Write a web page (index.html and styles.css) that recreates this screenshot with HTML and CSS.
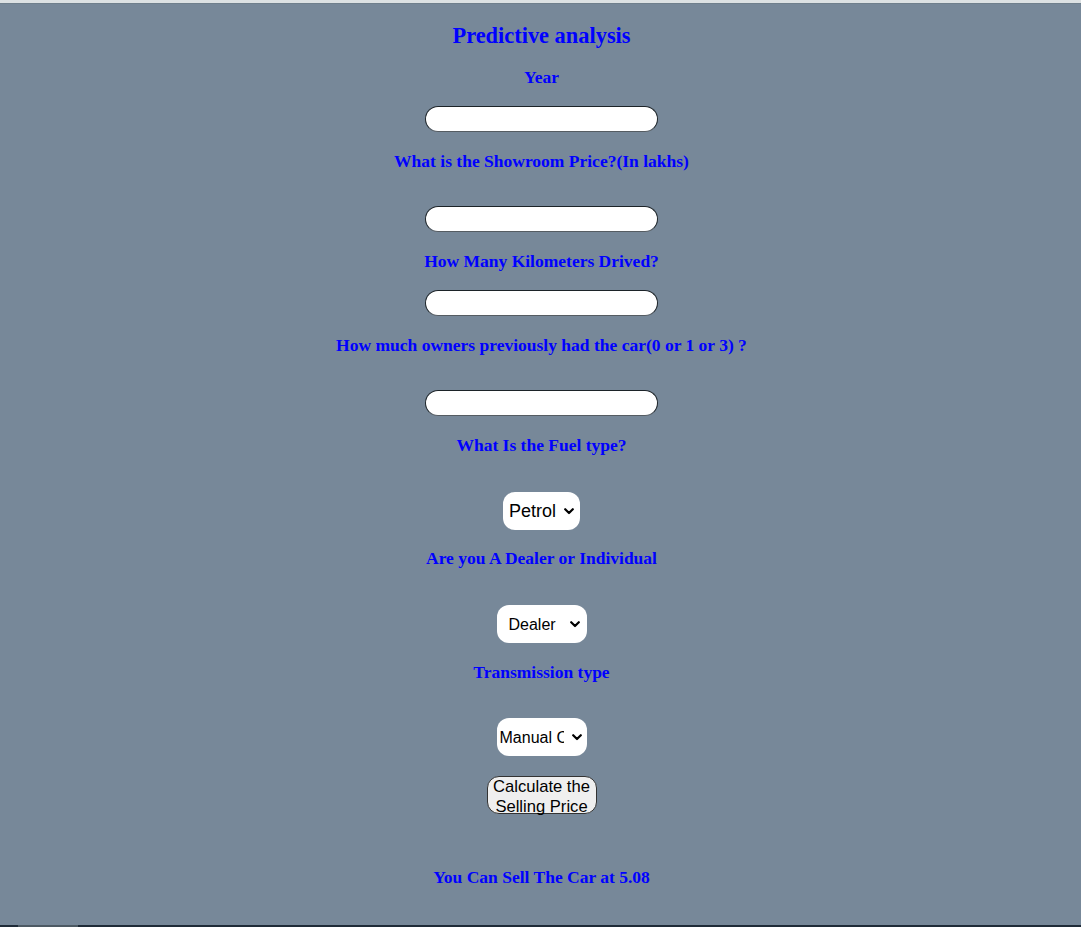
FILE: index.html
```
<!DOCTYPE html>
<html>
<head>
<meta charset="utf-8">
<title>Predictive analysis</title>
<link rel="stylesheet" href="styles.css">
</head>
<body>
<div class="topstrip"></div>
<form class="form">
  <h2 class="title">Predictive analysis</h2>
  <h4 class="label l-year">Year</h4>
  <input class="field f-tight" type="text" name="Year">
  <h4 class="label">What is the Showroom Price?(In lakhs)</h4>
  <input class="field f-loose" type="text" name="Present_Price">
  <h4 class="label">How Many Kilometers Drived?</h4>
  <input class="field f-tight" type="text" name="Kms_Driven">
  <h4 class="label">How much owners previously had the car(0 or 1 or 3) ?</h4>
  <input class="field f-loose" type="text" name="Owner">
  <h4 class="label">What Is the Fuel type?</h4>
  <select class="choice c-fuel" name="Fuel_Type_Petrol">
    <option>Petrol</option>
    <option>Diesel</option>
    <option>CNG</option>
  </select>
  <h4 class="label l-short">Are you A Dealer or Individual</h4>
  <select class="choice c-fixed" name="Seller_Type_Individual">
    <option>Dealer</option>
    <option>Individual</option>
  </select>
  <h4 class="label">Transmission type</h4>
  <select class="choice c-fixed c-last" name="Transmission_Mannual">
    <option>Manual Car</option>
    <option>Automatic Car</option>
  </select>
  <button class="submit" type="button">Calculate the Selling Price</button>
  <h4 class="label result">You Can Sell The Car at 5.08</h4>
</form>
<div class="bottombar"><span class="bottomtab"></span></div>
</body>
</html>
```
FILE: styles.css
```
html, body {
  margin: 0;
  padding: 0;
}
body {
  background: #778899;
  font-family: "Liberation Serif", "Times New Roman", serif;
  height: 927px;
  overflow: hidden;
  display: flex;
  flex-direction: column;
}
.topstrip {
  height: 3px;
  background: #dce1e3;
  border-bottom: 1px solid #6f7f8c;
  flex: none;
}
.form {
  flex: 1;
  display: flex;
  flex-direction: column;
  align-items: center;
  margin: 0;
  padding-left: 2px;
}
.title {
  margin: 18px 0 0;
  font-size: 22.4px;
  line-height: 28px;
  font-weight: bold;
  color: #0000ff;
}
.label {
  margin: 19px 0 0;
  font-size: 17.5px;
  line-height: 20px;
  font-weight: bold;
  color: #0000ff;
}
.l-year {
  margin-top: 17px;
}
.l-short {
  margin-top: 18px;
}
.field {
  box-sizing: border-box;
  width: 233px;
  height: 26px;
  border: 1px solid #1c2328;
  border-bottom-color: #555c62;
  border-radius: 13px;
  background: #fff;
  padding: 0 10px;
  font-family: "Liberation Sans", Arial, sans-serif;
  font-size: 14px;
}
.f-tight {
  margin-top: 19px;
}
.f-loose {
  margin-top: 35px;
}
.choice {
  box-sizing: border-box;
  -webkit-appearance: none;
  appearance: none;
  margin-top: 37px;
  height: 38px;
  border: none;
  border-radius: 12px;
  background-color: #fff;
  background-image: url("data:image/svg+xml,%3Csvg xmlns='http://www.w3.org/2000/svg' width='10' height='7' viewBox='0 0 10 7'%3E%3Cpolyline points='1.2,1.2 5,5 8.8,1.2' fill='none' stroke='%23000' stroke-width='2.2' stroke-linecap='round' stroke-linejoin='round'/%3E%3C/svg%3E");
  background-repeat: no-repeat;
  background-size: 10px 7px;
  color: #000;
  font-family: "Liberation Sans", Arial, sans-serif;
}
.c-fuel {
  width: 77px;
  font-size: 18px;
  padding: 0 18px 0 6px;
  background-position: right 6px center;
}
.c-fixed {
  width: 90px;
  font-size: 16px;
  padding: 0 20px 0 12px;
  background-position: right 7px center;
}
.c-last {
  margin-top: 36px;
  padding: 0 23px 0 3px;
  background-position: right 5px center;
}
.submit {
  box-sizing: border-box;
  margin-top: 20px;
  width: 110px;
  height: 38px;
  border: 1px solid #333;
  border-radius: 12px;
  background: #efefef;
  color: #000;
  font-family: "Liberation Sans", Arial, sans-serif;
  font-size: 16.6px;
  line-height: 20px;
  padding: 0 3px;
}
.result {
  margin-top: 53px;
}
.bottombar {
  flex: none;
  height: 2px;
  background: #1f2b38;
  position: relative;
}
.bottomtab {
  position: absolute;
  left: 18px;
  top: 0;
  width: 60px;
  height: 2px;
  background: #4d5a64;
}
```
